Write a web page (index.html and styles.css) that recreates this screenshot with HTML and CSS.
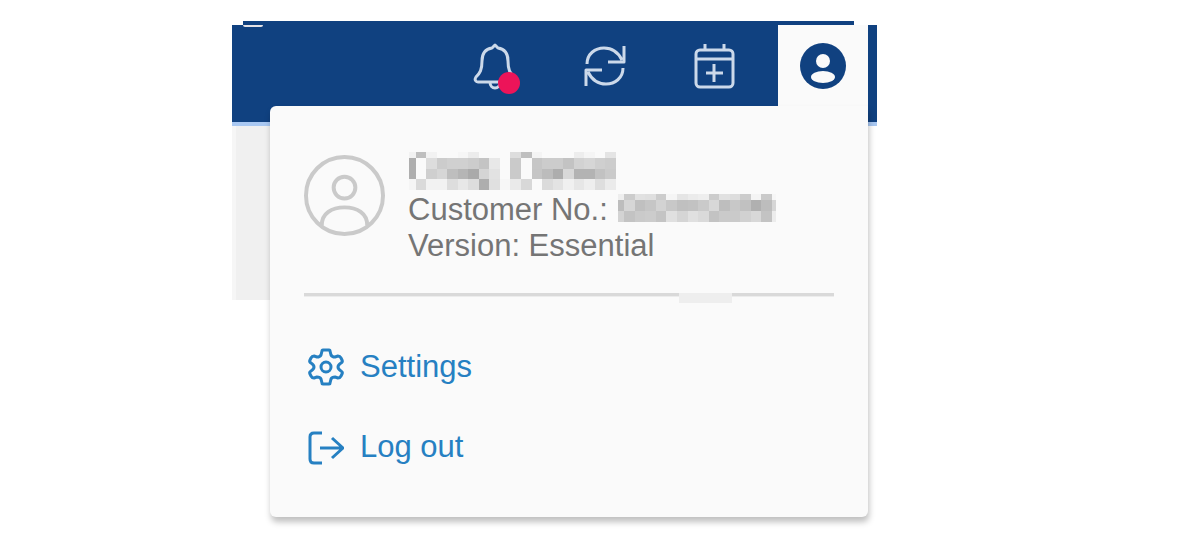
FILE: index.html
```html
<!DOCTYPE html>
<html lang="en">
<head>
    <meta charset="UTF-8">
    <meta name="viewport" content="width=device-width, initial-scale=1.0">
    <title>Account menu</title>
    <link rel="stylesheet" href="styles.css">
</head>
<body>
    <div class="screen">
        <div class="top-strip"></div>
        <header class="toolbar">
            <span class="logo-edge"></span>
            <button class="tool-btn" type="button" aria-label="Notifications">
                <svg width="44" height="50" viewBox="0 0 44 50">
                    <path class="line" d="M22 4L25 7C32 8 35 13 35 20C35 29 37 32 41 36C43 39 42 41 40 41H5C3 41 1 39 3 36C7 32 9 29 9 20C9 13 12 8 19 7Z"/>
                    <path class="line" d="M17 41C17 49 27 49 27 41"/>
                </svg>
                <span class="alert-dot"></span>
            </button>
            <button class="tool-btn" type="button" aria-label="Refresh">
                <svg width="44" height="44" viewBox="0 0 44 44">
                    <path class="line" d="M4 20C4 10 12 4 21 4C29 4 35 8 39 16M41 2V18H25M40 24C40 34 32 40 23 40C15 40 9 36 5 28M3 42V26H19"/>
                </svg>
            </button>
            <button class="tool-btn" type="button" aria-label="Add appointment">
                <svg width="44" height="48" viewBox="0 0 44 48">
                    <rect class="line" x="3" y="8" width="37" height="37" rx="4"/>
                    <path class="line" d="M3 17H40M12 2V8M31 2V8M21 22V40M13 31H30"/>
                </svg>
            </button>
            <button class="tool-btn account-btn" type="button" aria-label="Account" aria-expanded="true">
                <svg width="46" height="46" viewBox="0 0 46 46">
                    <circle cx="23" cy="23" r="23" fill="#104180"/>
                    <circle cx="23" cy="18" r="7" fill="#fafafa"/>
                    <ellipse cx="23" cy="34" rx="12" ry="6" fill="#fafafa"/>
                </svg>
            </button>
        </header>
        <div class="page-edge"></div>

        <div class="account-menu">
            <section class="profile">
                <svg class="avatar" width="81" height="81" viewBox="0 0 82 82">
                    <circle cx="41" cy="41" r="39"/>
                    <circle cx="41" cy="33" r="11"/>
                    <path d="M18 71C18 59 28 53 41 53C54 53 64 59 64 71"/>
                </svg>
                <div class="details">
                    <div class="name"><svg id="nameMask" width="207" height="38" viewBox="0 0 621 114"></svg></div>
                    <div class="number">Customer No.: <svg id="numberMask" width="158" height="28" viewBox="0 0 474 84"></svg></div>
                    <div>Version: Essential</div>
                </div>
            </section>
            <div class="divider"><span></span></div>
            <nav class="links">
                <a href="#settings">
                    <svg width="36" height="38" viewBox="0 0 36 38">
                        <path d="M14 3Q14 2 15 2H21Q22 2 22 3L23 7Q24 9 27 9L30 8Q32 8 33 10L34 12Q35 14 33 15Q30 17 30 19Q30 21 33 23Q35 24 34 26L33 28Q32 30 30 30L27 29Q24 29 23 31L22 35Q22 36 21 36H15Q14 36 14 35L13 31Q12 29 9 29L6 30Q4 30 3 28L2 26Q1 24 3 23Q6 21 6 19Q6 17 3 15Q1 14 2 12L3 10Q4 8 6 8L9 9Q12 9 13 7Z"/>
                        <circle cx="18" cy="19" r="5"/>
                    </svg>
                    Settings
                </a>
                <a href="#logout">
                    <svg width="36" height="36" viewBox="0 0 36 36">
                        <path d="M14 4H6Q2 4 2 8V30Q2 34 6 34H14M12 19H35M24 9L35 19L24 29"/>
                    </svg>
                    Log out
                </a>
            </nav>
        </div>
    </div>

    <script src="main.js"></script>
</body>
</html>
```

FILE: styles.css
```css
* { margin: 0; padding: 0; box-sizing: border-box; }
:root {
    --blue: #104180; --light-blue: #a9c8f2; --link: #2680c2;
    --panel: #fafafa; --page-gray: #f0f0f0;
    --text: #757575; --icon: #ccd9ea; --alert: #ec1459;
}
body { display: grid; grid-template-columns: 232fr 645fr 323fr; min-height: 100vh; background: #fff; color: var(--text); font: 31px/36px 'Liberation Sans', Arial, sans-serif; }
.screen { grid-column: 2; position: relative; padding-top: 21px; }
.top-strip { height: 4px; margin: 0 23px 0 11px; background: var(--blue); }

/* Toolbar */
.toolbar { display: flex; justify-content: flex-end; height: 101px; padding-right: 9px; background: var(--blue); border-bottom: 4px solid var(--light-blue); }
.logo-edge { width: 20px; height: 2px; margin: 0 auto 0 11px; background: #e4e2e6; border-radius: 0 0 10px 10px; }
.tool-btn { position: relative; display: flex; align-items: center; justify-content: center; width: 110px; height: 82px; background: none; border: 0; cursor: pointer; }
.line { fill: none; stroke: var(--icon); stroke-width: 3; stroke-linejoin: round; }
.alert-dot { position: absolute; left: 58px; top: 47px; width: 22px; height: 22px; border-radius: 50%; background: var(--alert); }
.account-btn { width: 90px; margin-left: 8px; background: var(--panel); }
.page-edge { width: 38px; height: 174px; background: var(--page-gray); border-left: 4px solid #f6f6f6; }

/* Account menu */
.account-menu { position: absolute; top: 106px; left: 38px; right: 9px; padding: 46px 34px 52px; background: var(--panel); border-radius: 6px 0 6px 6px; box-shadow: 1px 5px 6px rgba(0, 0, 0, 0.25); }
.profile { display: flex; gap: 23px; }
.avatar { flex: none; margin-top: 3px; fill: none; stroke: #cacaca; stroke-width: 4; }
.details { flex: 1; white-space: nowrap; }
.name { height: 40px; }
.name svg { display: block; margin-left: 1px; }
.number { display: flex; align-items: center; gap: 10px; height: 36px; }
.number svg { align-self: flex-start; margin-top: 2px; }
.divider { height: 4px; margin: 29px 0 52px; background: #d9d9d9; border-bottom: 1px solid #ececec; }
.divider span { display: block; width: 53px; height: 10px; margin-left: 375px; background: #eee; }
.links { display: flex; flex-direction: column; gap: 44px; padding-left: 4px; }
.links a { display: flex; align-items: center; gap: 16px; height: 36px; color: var(--link); text-decoration: none; }
.links svg { fill: none; stroke: var(--link); stroke-width: 3; stroke-linejoin: round; }
```

FILE: main.js
```js
// Masked fields: column edges, row edges and one gray level per cell
const masks = {
    nameMask: {
        x: [0, 20, 52, 83, 115, 146, 177, 209, 241, 273, 304, 336, 368, 400, 431, 462, 494, 526, 558, 589, 621],
        y: [0, 18, 51, 81, 114],
        rows: [
            'f2 bf f2 fa fa f6 ec fa fa fa dd bf f4 fa fa fa ed f5 fa e4',
            'ae fa dd cc d0 d0 cc c4 e8 fa ca fa c6 cc cc c3 d2 d6 cf cc',
            'ae fa cf d6 be b5 aa d5 e2 fa ca fa c5 bc ad d8 b3 b3 c2 ca',
            'f5 da f2 f2 dd e7 dd ae e0 f7 ea d8 fa db e3 f0 e6 ee de eb'
        ]
    },
    numberMask: {
        x: [0, 18, 51, 82, 114, 145, 177, 209, 240, 272, 303, 335, 366, 398, 430, 462, 474],
        y: [0, 18, 51, 84],
        rows: [
            'ee cc e1 df cc f5 e5 eb ee cc e1 dd cc f4 ca f6',
            'bd d6 c0 c6 d3 c8 c0 c2 ca d8 be c8 c1 b0 bd d6',
            'd3 c3 ca cc c4 e0 d5 e0 da c3 ca ca d1 d8 c3 ec'
        ]
    }
};

Object.entries(masks).forEach(([id, mask]) => {
    const svg = document.getElementById(id);
    svg.setAttribute('shape-rendering', 'crispEdges');
    mask.rows.forEach((row, r) => {
        row.split(' ').forEach((level, c) => {
            const cell = document.createElementNS('http://www.w3.org/2000/svg', 'rect');
            cell.setAttribute('x', mask.x[c]);
            cell.setAttribute('y', mask.y[r]);
            cell.setAttribute('width', mask.x[c + 1] - mask.x[c]);
            cell.setAttribute('height', mask.y[r + 1] - mask.y[r]);
            cell.setAttribute('fill', '#' + level.repeat(3));
            svg.appendChild(cell);
        });
    });
});
```
